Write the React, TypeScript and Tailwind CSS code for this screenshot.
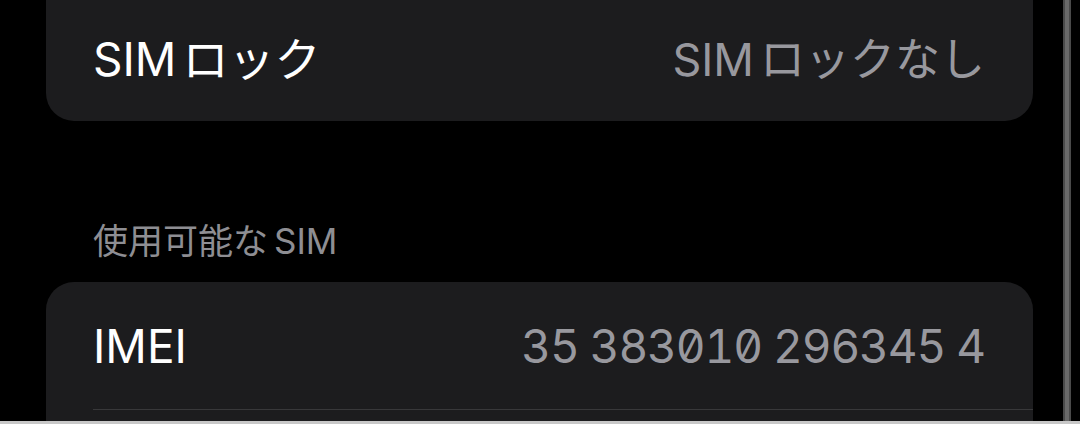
import React from 'react';

const FONT = "font-['Inter','Noto_Sans_CJK_JP',sans-serif]";

// Latin run followed by Japanese run, with the small gap iOS puts between them
const Mixed: React.FC<{ latin?: string; jp: string; jpFirst?: boolean }> = ({ latin, jp, jpFirst }) =>
  jpFirst ? (
    <>
      {jp}
      <span className="ml-[6px]">{latin}</span>
    </>
  ) : (
    <>
      {latin}
      <span className="ml-[6px]">{jp}</span>
    </>
  );

const Row: React.FC<{ label: React.ReactNode; value: React.ReactNode; mono?: boolean }> = ({
  label,
  value,
  mono,
}) => (
  <div className="flex items-center justify-between pl-[47px] pr-[48px] h-full">
    <span className="text-[46px] leading-none text-white">{label}</span>
    <span
      className={`leading-none text-[#98989e] ${
        mono ? 'text-[46px] tabular-nums slashed-zero tracking-[-0.025em]' : 'text-[45px]'
      }`}
    >
      {value}
    </span>
  </div>
);

export default function App() {
  return (
    <div className={`w-[1080px] h-[424px] bg-black flex flex-col overflow-hidden ${FONT}`}>
      <div className="flex flex-1 min-h-0">
        {/* settings column */}
        <div className="w-[1063px] pl-[46px] pr-[30px] flex flex-col">
          {/* SIM lock card */}
          <div className="-mt-[3px] h-[124px] shrink-0 bg-[#1c1c1e] rounded-b-[28px]">
            <Row
              label={<Mixed latin="SIM" jp="ロック" />}
              value={<Mixed latin="SIM" jp="ロックなし" />}
            />
          </div>

          {/* section header */}
          <div className="mt-[98px] mb-[19px] pl-[47px] text-[35px] leading-[44px] text-[#8e8e93]">
            <Mixed jp="使用可能な" latin="SIM" jpFirst />
          </div>

          {/* available SIM card */}
          <div className="flex-1 bg-[#1c1c1e] rounded-t-[28px] flex flex-col">
            <div className="h-[127px] shrink-0">
              <Row label="IMEI" value="35 383010 296345 4" mono />
            </div>
            <div className="ml-[47px] h-[1px] bg-[#38383a]" />
            <div className="flex-1" />
          </div>
        </div>

        {/* frame edge */}
        <div className="w-[8px] flex">
          <div className="w-[2px] bg-[#4a4a4a]" />
          <div className="w-[4px] bg-[#6a6a6a]" />
          <div className="w-[2px] bg-[#4a4a4a]" />
        </div>
        <div className="flex-1" />
      </div>
      <div className="h-[3px] shrink-0 bg-[#c8c8c8]" />
    </div>
  );
}
